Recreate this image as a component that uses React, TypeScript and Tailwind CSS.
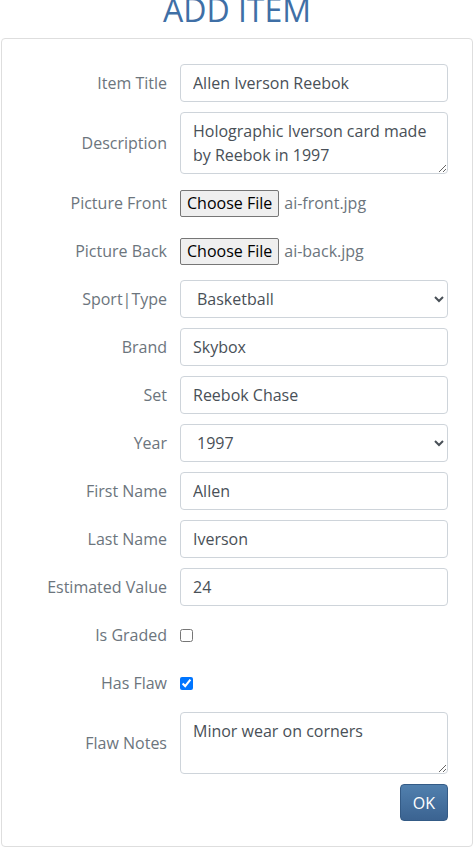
import React from "react";

const labelCls =
  "flex items-center justify-end min-h-[38px] text-[16px] leading-6 text-[#6c757d] text-right";
const inputCls =
  "block w-full h-[38px] border border-[#ced4da] rounded-[4px] bg-white px-[12px] py-[6px] text-[16px] leading-6 text-[#495057] outline-none";
const textareaCls =
  "block w-full h-[62px] border border-[#ced4da] rounded-[4px] bg-white px-[12px] py-[6px] text-[16px] leading-6 text-[#495057] outline-none resize-y";

function FileField({ name }: { name: string }) {
  return (
    <div className="flex items-center h-[38px]">
      <button
        type="button"
        className="h-[27px] px-[6px] border border-[#767676] rounded-[2px] bg-[#efefef] text-[16px] leading-5 text-black"
      >
        Choose File
      </button>
      <span className="ml-[5px] text-[16px] leading-6 text-[#6c757d]">{name}</span>
    </div>
  );
}

export default function App() {
  return (
    <div className="font-['Open_Sans',sans-serif] bg-white min-h-screen overflow-hidden">
      <h1 className="-mt-[9px] mb-[9px] text-center text-[32px] leading-[38px] font-normal text-[#3f6fa6]">
        ADD ITEM
      </h1>
      <div className="mx-[1px] border border-[#dedede] rounded-[4px] pt-[25px] pb-[25px] pl-[13px] pr-[24px]">
        <div className="grid grid-cols-[152px_1fr] gap-x-[13px] gap-y-[10px] items-center">
          <label className={labelCls}>Item Title</label>
          <input className={inputCls} defaultValue="Allen Iverson Reebok" />

          <label className={labelCls}>Description</label>
          <textarea
            className={textareaCls}
            rows={2}
            defaultValue="Holographic Iverson card made by Reebok in 1997"
          />

          <label className={labelCls}>Picture Front</label>
          <FileField name="ai-front.jpg" />

          <label className={labelCls}>Picture Back</label>
          <FileField name="ai-back.jpg" />

          <label className={labelCls}>Sport|Type</label>
          <select className={inputCls} defaultValue="Basketball">
            <option>Basketball</option>
            <option>Baseball</option>
            <option>Football</option>
          </select>

          <label className={labelCls}>Brand</label>
          <input className={inputCls} defaultValue="Skybox" />

          <label className={labelCls}>Set</label>
          <input className={inputCls} defaultValue="Reebok Chase" />

          <label className={labelCls}>Year</label>
          <select className={inputCls} defaultValue="1997">
            <option>1996</option>
            <option>1997</option>
            <option>1998</option>
          </select>

          <label className={labelCls}>First Name</label>
          <input className={inputCls} defaultValue="Allen" />

          <label className={labelCls}>Last Name</label>
          <input className={inputCls} defaultValue="Iverson" />

          <label className={labelCls}>Estimated Value</label>
          <input className={inputCls} defaultValue="24" />

          <label className={labelCls}>Is Graded</label>
          <div className="flex items-center h-[38px]">
            <input type="checkbox" className="m-0 w-[13px] h-[13px]" />
          </div>

          <label className={labelCls}>Has Flaw</label>
          <div className="flex items-center h-[38px]">
            <input type="checkbox" defaultChecked className="m-0 w-[13px] h-[13px]" />
          </div>

          <label className={labelCls}>Flaw Notes</label>
          <textarea className={textareaCls} rows={2} defaultValue="Minor wear on corners" />

          <div />
          <div className="flex justify-end">
            <button
              type="button"
              className="h-[37px] px-[12px] rounded-[4px] border border-[#345b86] bg-gradient-to-b from-[#5180ae] to-[#3b6391] text-white text-[16px] leading-6"
            >
              OK
            </button>
          </div>
        </div>
      </div>
    </div>
  );
}
